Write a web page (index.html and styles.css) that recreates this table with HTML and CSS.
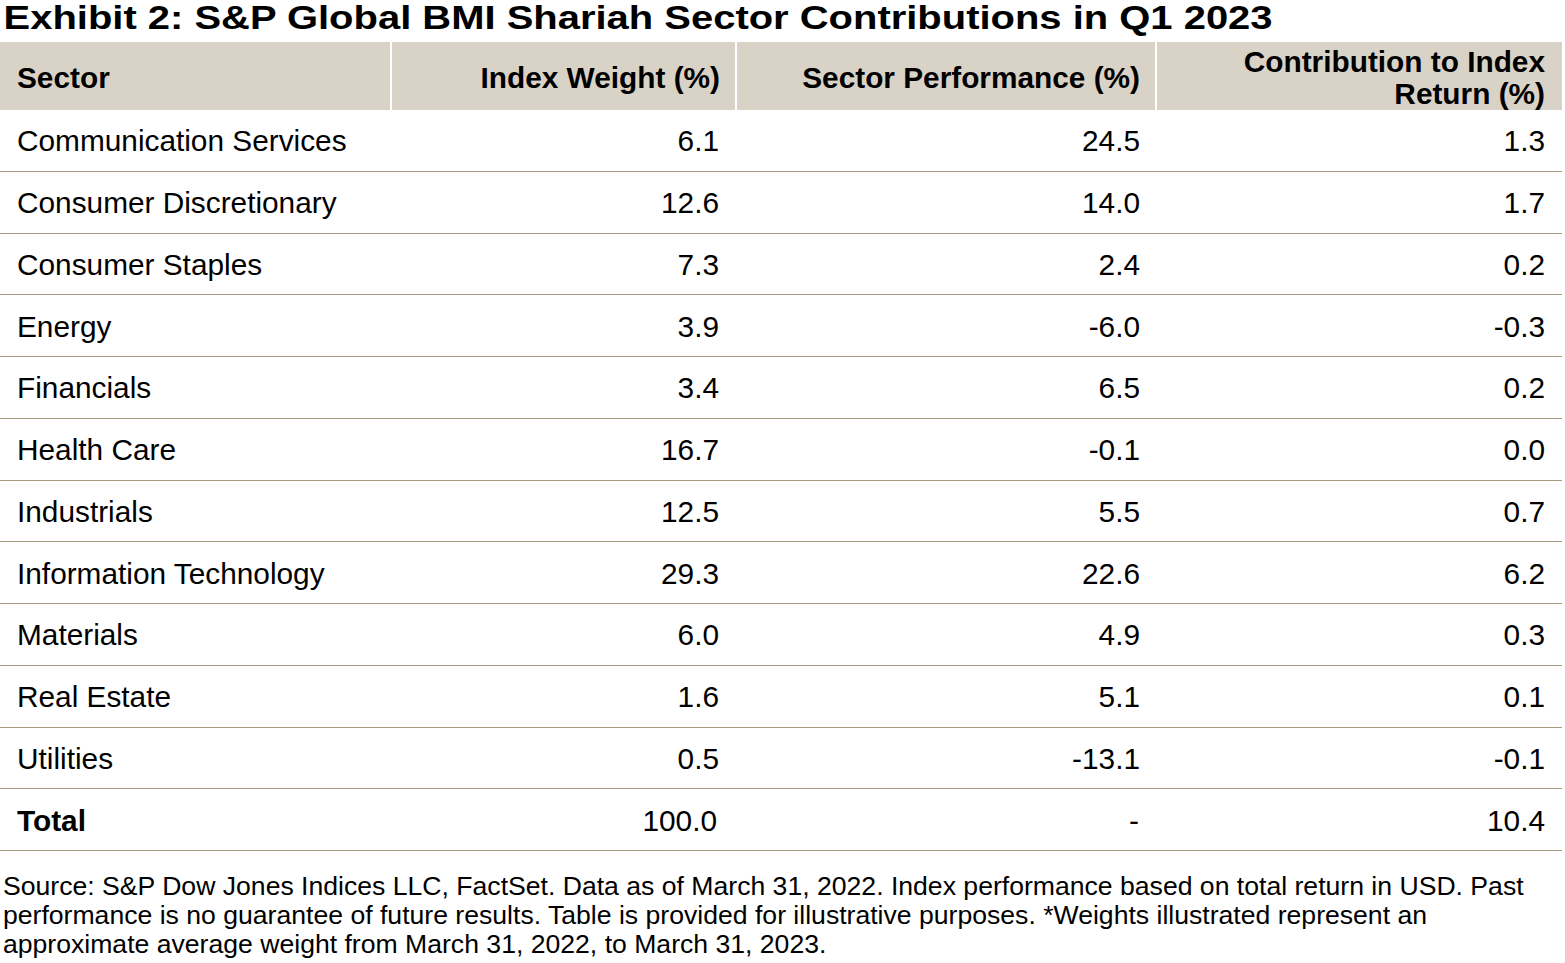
FILE: index.html
```html
<!DOCTYPE html>
<html lang="en">
<head>
<meta charset="utf-8">
<title>Exhibit 2</title>
<link rel="stylesheet" href="styles.css">
</head>
<body>
<div class="page">
  <h1 class="title">Exhibit 2: S&amp;P Global BMI Shariah Sector Contributions in Q1 2023</h1>
  <table class="tbl">
    <colgroup>
      <col class="w1"><col class="w2"><col class="w3"><col class="w4">
    </colgroup>
    <thead>
      <tr>
        <th class="c1">Sector</th>
        <th class="num">Index Weight (%)</th>
        <th class="num">Sector Performance (%)</th>
        <th class="num">Contribution to Index<br>Return (%)</th>
      </tr>
    </thead>
    <tbody>
      <tr><td>Communication Services</td><td class="num">6.1</td><td class="num">24.5</td><td class="num">1.3</td></tr>
      <tr><td>Consumer Discretionary</td><td class="num">12.6</td><td class="num">14.0</td><td class="num">1.7</td></tr>
      <tr><td>Consumer Staples</td><td class="num">7.3</td><td class="num">2.4</td><td class="num">0.2</td></tr>
      <tr><td>Energy</td><td class="num">3.9</td><td class="num">-6.0</td><td class="num">-0.3</td></tr>
      <tr><td>Financials</td><td class="num">3.4</td><td class="num">6.5</td><td class="num">0.2</td></tr>
      <tr><td>Health Care</td><td class="num">16.7</td><td class="num">-0.1</td><td class="num">0.0</td></tr>
      <tr><td>Industrials</td><td class="num">12.5</td><td class="num">5.5</td><td class="num">0.7</td></tr>
      <tr><td>Information Technology</td><td class="num">29.3</td><td class="num">22.6</td><td class="num">6.2</td></tr>
      <tr><td>Materials</td><td class="num">6.0</td><td class="num">4.9</td><td class="num">0.3</td></tr>
      <tr><td>Real Estate</td><td class="num">1.6</td><td class="num">5.1</td><td class="num">0.1</td></tr>
      <tr><td>Utilities</td><td class="num">0.5</td><td class="num">-13.1</td><td class="num">-0.1</td></tr>
      <tr class="total"><td class="bold">Total</td><td class="num tot2">100.0</td><td class="num tot3">-</td><td class="num">10.4</td></tr>
    </tbody>
  </table>
  <p class="note">Source: S&amp;P Dow Jones Indices LLC, FactSet. Data as of March 31, 2022. Index performance based on total return in USD. Past performance is no guarantee of future results. Table is provided for illustrative purposes. *Weights illustrated represent an approximate average weight from March 31, 2022, to March 31, 2023.</p>
</div>
</body>
</html>
```

FILE: styles.css
```css
html, body {
  margin: 0;
  padding: 0;
  background: #ffffff;
}

.page {
  width: 1565px;
  font-family: "Liberation Sans", Arial, sans-serif;
  color: #000000;
}

.title {
  width: fit-content;
  margin: 0 0 7px 0;
  padding-left: 3px;
  font-size: 34px;
  font-weight: bold;
  line-height: 35px;
  white-space: nowrap;
  transform: scaleX(1.175);
  transform-origin: 0 50%;
}

.tbl {
  width: 1562px;
  border-collapse: separate;
  border-spacing: 0;
  table-layout: fixed;
  font-size: 29.8px;
}

.w1 { width: 390px; }
.w2 { width: 345px; }
.w3 { width: 420px; }
.w4 { width: 407px; }

.tbl th,
.tbl td {
  box-sizing: border-box;
  white-space: nowrap;
  vertical-align: middle;
}

.tbl th {
  background: #d9d2c6;
  font-weight: bold;
  height: 68px;
  padding: 4px 15px 0 16px;
  line-height: 32px;
  border-left: 2px solid #ffffff;
  text-align: left;
}

.tbl th.c1 { border-left: 0; padding-left: 17px; }
.tbl th:nth-child(4) { padding-right: 17px; }

.tbl td {
  height: 61.75px;
  padding: 2px 16px 0 16px;
  border-bottom: 1px solid #a89c83;
  line-height: 32px;
}

.tbl td:first-child { padding-left: 17px; }
.tbl td:nth-child(3) { padding-right: 15px; }
.tbl td:nth-child(4) { padding-right: 17px; }

.tbl .num { text-align: right; }
.tbl td.bold { font-weight: bold; }
.tbl td.tot2 { padding-right: 18px; }
.tbl td.tot3 { padding-right: 16px; }

.note {
  margin: 21px 0 0 0;
  padding-left: 3px;
  width: 1540px;
  font-size: 26.6px;
  line-height: 29px;
}
```
